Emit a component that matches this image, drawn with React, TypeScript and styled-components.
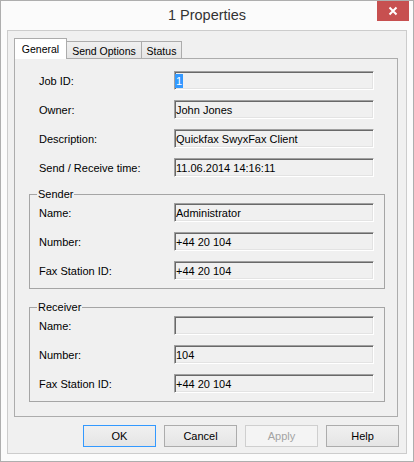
import React from "react";
import styled, { createGlobalStyle } from "styled-components";

const GlobalStyle = createGlobalStyle`
  html, body {
    margin: 0;
    padding: 0;
    background: #ffffff;
  }
  * {
    box-sizing: border-box;
  }
`;

const uiFont = `"Liberation Sans", Arial, sans-serif`;

const Window = styled.div`
  width: 414px;
  height: 462px;
  border: 1px solid #aeaeae;
  background: #fbfbfb;
  display: flex;
  flex-direction: column;
  font-family: ${uiFont};
`;

const TitleBar = styled.div`
  height: 29px;
  display: grid;
  grid-template-columns: 1fr auto 1fr;
  align-items: start;
`;

const Title = styled.div`
  grid-column: 2;
  font-size: 14.5px;
  line-height: 29px;
  color: #333333;
`;

const CloseButton = styled.div`
  grid-column: 3;
  justify-self: end;
  width: 32px;
  height: 20px;
  margin-right: 4px;
  background: #c75050;
  display: flex;
  align-items: center;
  justify-content: center;
`;

const Client = styled.div`
  flex: 1;
  margin: 0 6px 7px 6px;
  border: 1px solid #cccccc;
  background: #f0f0f0;
  display: flex;
  flex-direction: column;
`;

const TabArea = styled.div`
  margin: 7px 8px 0 6px;
  display: flex;
  flex-direction: column;
`;

const TabStrip = styled.div`
  height: 20px;
  display: flex;
  align-items: flex-end;
`;

const Tab = styled.div<{ $active?: boolean; $width: number }>`
  position: relative;
  width: ${(p) => p.$width}px;
  height: ${(p) => (p.$active ? 21 : 17)}px;
  margin-bottom: ${(p) => (p.$active ? -1 : 0)}px;
  margin-left: ${(p) => (p.$active ? 0 : -1)}px;
  z-index: ${(p) => (p.$active ? 2 : 1)};
  border: 1px solid #acacac;
  border-bottom: none;
  background: ${(p) =>
    p.$active ? "#ffffff" : "linear-gradient(#f0f0f0, #e5e5e5)"};
  font-size: 10.5px;
  color: #000000;
  display: flex;
  align-items: center;
  justify-content: center;
  padding-top: ${(p) => (p.$active ? 0 : 1)}px;
  &:first-child {
    margin-left: 0;
  }
`;

const Panel = styled.div`
  height: 359px;
  border: 1px solid #acacac;
  background: #f0f0f0;
  padding: 12px 12px 0 24px;
  display: flex;
  flex-direction: column;
`;

const FieldGrid = styled.div`
  display: grid;
  grid-template-columns: 135px 200px;
  grid-auto-rows: 19px;
  row-gap: 10px;
  align-items: center;
`;

const Label = styled.div`
  font-size: 11px;
  color: #000000;
  white-space: nowrap;
  padding-top: 1px;
`;

const Field = styled.div`
  width: 200px;
  height: 19px;
  padding-left: 1px;
  border: 1px solid;
  border-color: #a0a0a0 #ffffff #ffffff #a0a0a0;
  box-shadow: inset 1px 1px 0 #696969, inset -1px -1px 0 #e3e3e3;
  background: #f0f0f0;
  font-size: 11px;
  color: #000000;
  display: flex;
  align-items: center;
  white-space: nowrap;
  overflow: hidden;
`;

const Selected = styled.span`
  display: inline-block;
  margin-left: -1px;
  padding: 0 1px 0 1px;
  line-height: 14px;
  background: #3399ff;
  color: #ffffff;
`;

const GroupBox = styled.fieldset<{ $gap: number }>`
  margin: ${(p) => p.$gap}px 0 0 -10px;
  width: 356px;
  min-width: 0;
  border: 1px solid #a5a5a5;
  padding: 2px 0 8px 9px;
`;

const Caption = styled.legend`
  margin-left: -2px;
  padding: 0 1px;
  font-size: 11px;
  line-height: 13px;
  color: #000000;
`;

const ButtonRow = styled.div`
  margin: 8px 7px 0 0;
  display: flex;
  justify-content: flex-end;
  gap: 8px;
`;

const Button = styled.div<{ $default?: boolean; $disabled?: boolean }>`
  width: 73px;
  height: 22px;
  border: 1px solid
    ${(p) => (p.$default ? "#3399ff" : p.$disabled ? "#cfcfcf" : "#acacac")};
  background: ${(p) =>
    p.$disabled ? "#f4f4f4" : "linear-gradient(#f0f0f0, #e5e5e5)"};
  color: ${(p) => (p.$disabled ? "#a3a3a3" : "#000000")};
  font-size: 11px;
  display: flex;
  align-items: center;
  justify-content: center;
`;

interface Row {
  label: string;
  value: React.ReactNode;
}

const generalRows: Row[] = [
  { label: "Job ID:", value: <Selected>1</Selected> },
  { label: "Owner:", value: "John Jones" },
  { label: "Description:", value: "Quickfax SwyxFax Client" },
  { label: "Send / Receive time:", value: "11.06.2014 14:16:11" },
];

const senderRows: Row[] = [
  { label: "Name:", value: "Administrator" },
  { label: "Number:", value: "+44 20 104" },
  { label: "Fax Station ID:", value: "+44 20 104" },
];

const receiverRows: Row[] = [
  { label: "Name:", value: "" },
  { label: "Number:", value: "104" },
  { label: "Fax Station ID:", value: "+44 20 104" },
];

const Fields = ({ rows }: { rows: Row[] }) => (
  <FieldGrid>
    {rows.map((row) => (
      <React.Fragment key={row.label}>
        <Label>{row.label}</Label>
        <Field>{row.value}</Field>
      </React.Fragment>
    ))}
  </FieldGrid>
);

const App = () => {
  return (
    <>
      <GlobalStyle />
      <Window>
        <TitleBar>
          <Title>1 Properties</Title>
          <CloseButton>
            <svg width="10" height="10" viewBox="0 0 10 10">
              <path
                d="M1.5 1.5 L8.5 8.5 M8.5 1.5 L1.5 8.5"
                stroke="#ffffff"
                strokeWidth="2"
              />
            </svg>
          </CloseButton>
        </TitleBar>
        <Client>
          <TabArea>
            <TabStrip>
              <Tab $active $width={53}>General</Tab>
              <Tab $width={76}>Send Options</Tab>
              <Tab $width={41}>Status</Tab>
            </TabStrip>
            <Panel>
              <Fields rows={generalRows} />
              <GroupBox $gap={11}>
                <Caption>Sender</Caption>
                <Fields rows={senderRows} />
              </GroupBox>
              <GroupBox $gap={12}>
                <Caption>Receiver</Caption>
                <Fields rows={receiverRows} />
              </GroupBox>
            </Panel>
          </TabArea>
          <ButtonRow>
            <Button $default>OK</Button>
            <Button>Cancel</Button>
            <Button $disabled>Apply</Button>
            <Button>Help</Button>
          </ButtonRow>
        </Client>
      </Window>
    </>
  );
};

export default App;
